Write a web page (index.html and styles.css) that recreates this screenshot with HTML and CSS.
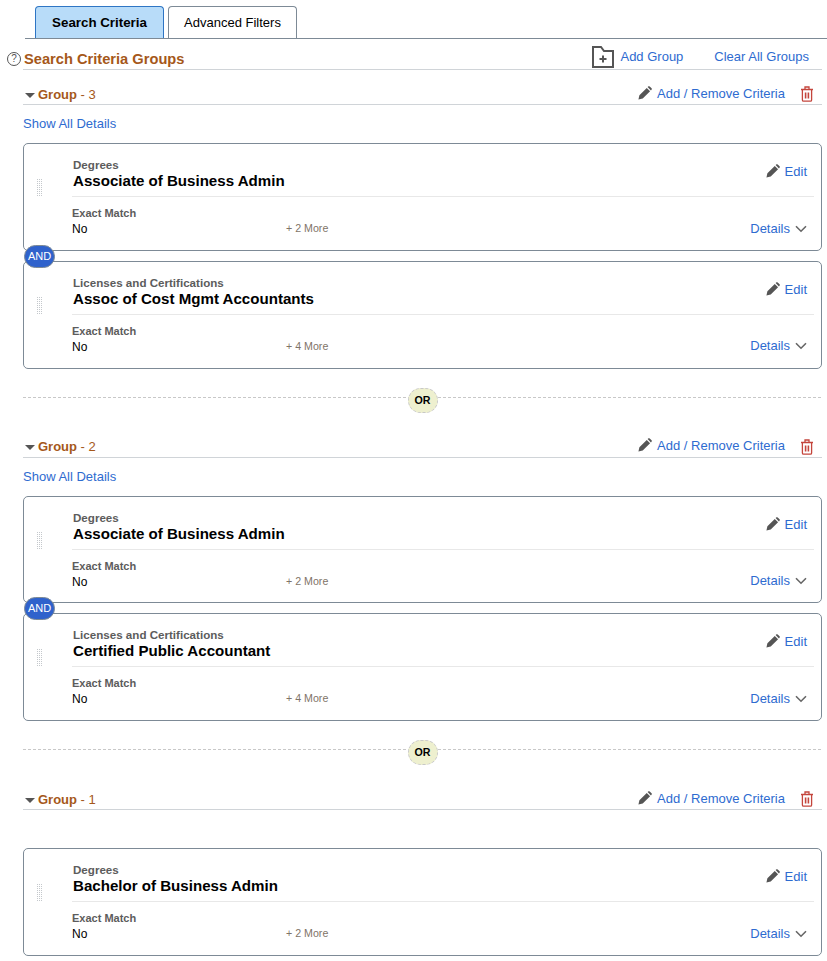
FILE: index.html
```html
<!DOCTYPE html>
<html lang="en">
<head>
    <meta charset="UTF-8">
    <title>Search Criteria</title>
    <link rel="stylesheet" href="styles.css">
</head>
<body>
    <svg class="icon-defs" width="0" height="0">
        <symbol id="pencil" viewBox="0 0 16 16">
            <path d="M0.5 15.5 L1.6 10.6 L10 2.2 L13.8 6 L5.4 14.4 Z M11 1.2 L12 0.4 Q12.7 -0.1 13.4 0.5 L15.5 2.6 Q16.1 3.3 15.6 4 L14.8 5 Z" fill="#555"/>
        </symbol>
        <symbol id="trash" viewBox="0 0 14 16">
            <path d="M1 3.5 H13 M5 3.2 V1 H9 V3.2 M2.4 3.5 V14 Q2.4 15.2 3.6 15.2 H10.4 Q11.6 15.2 11.6 14 V3.5" fill="none" stroke="#c4453c" stroke-width="1.3"/>
            <path d="M5.6 6.5 V12.5 M8.4 6.5 V12.5" fill="none" stroke="#c4453c" stroke-width="1.6"/>
        </symbol>
        <symbol id="chevron" viewBox="0 0 12 8">
            <path d="M1 1.2 L6 6.2 L11 1.2" fill="none" stroke="#666" stroke-width="1.6"/>
        </symbol>
    </svg>

    <div class="tabs">
        <a class="tab tab-active">Search Criteria</a>
        <a class="tab">Advanced Filters</a>
    </div>

    <div class="page-head">
        <span class="help">?</span>
        <h1>Search Criteria Groups</h1>
        <a class="link add-group">
            <svg class="folder" width="22" height="22" viewBox="0 0 22 22">
                <path d="M1 21 V1 H9 L12 5 H21 V21 Z" fill="none" stroke="#555" stroke-width="2"/>
                <path d="M11 9.5 V16.5 M7.5 13 H14.5" fill="none" stroke="#555" stroke-width="2"/>
            </svg>
            Add Group
        </a>
        <a class="link clear-all">Clear All Groups</a>
    </div>

    <section class="group">
        <div class="group-head">
            <span class="caret"></span>
            <h2>Group <span class="group-num">- 3</span></h2>
            <a class="link group-edit"><svg class="pencil"><use href="#pencil"/></svg>Add / Remove Criteria</a>
            <svg class="trash"><use href="#trash"/></svg>
        </div>
        <div class="show-all"><a class="link">Show All Details</a></div>

        <div class="card">
            <div class="handle"></div>
            <div class="card-body">
                <div class="card-top">
                    <div>
                        <div class="card-label">Degrees</div>
                        <div class="card-title">Associate of Business Admin</div>
                    </div>
                    <a class="link edit"><svg class="pencil"><use href="#pencil"/></svg>Edit</a>
                </div>
                <div class="card-bottom">
                    <div class="match">
                        <div class="match-label">Exact Match</div>
                        <div class="match-value">No</div>
                    </div>
                    <span class="more">+ 2 More</span>
                    <a class="link details">Details<svg class="chevron"><use href="#chevron"/></svg></a>
                </div>
            </div>
        </div>
        <div class="and-gap"><span class="and">AND</span></div>
        <div class="card">
            <div class="handle"></div>
            <div class="card-body">
                <div class="card-top">
                    <div>
                        <div class="card-label">Licenses and Certifications</div>
                        <div class="card-title">Assoc of Cost Mgmt Accountants</div>
                    </div>
                    <a class="link edit"><svg class="pencil"><use href="#pencil"/></svg>Edit</a>
                </div>
                <div class="card-bottom">
                    <div class="match">
                        <div class="match-label">Exact Match</div>
                        <div class="match-value">No</div>
                    </div>
                    <span class="more">+ 4 More</span>
                    <a class="link details">Details<svg class="chevron"><use href="#chevron"/></svg></a>
                </div>
            </div>
        </div>
    </section>

    <div class="or-row"><span class="or">OR</span></div>

    <section class="group">
        <div class="group-head">
            <span class="caret"></span>
            <h2>Group <span class="group-num">- 2</span></h2>
            <a class="link group-edit"><svg class="pencil"><use href="#pencil"/></svg>Add / Remove Criteria</a>
            <svg class="trash"><use href="#trash"/></svg>
        </div>
        <div class="show-all"><a class="link">Show All Details</a></div>

        <div class="card">
            <div class="handle"></div>
            <div class="card-body">
                <div class="card-top">
                    <div>
                        <div class="card-label">Degrees</div>
                        <div class="card-title">Associate of Business Admin</div>
                    </div>
                    <a class="link edit"><svg class="pencil"><use href="#pencil"/></svg>Edit</a>
                </div>
                <div class="card-bottom">
                    <div class="match">
                        <div class="match-label">Exact Match</div>
                        <div class="match-value">No</div>
                    </div>
                    <span class="more">+ 2 More</span>
                    <a class="link details">Details<svg class="chevron"><use href="#chevron"/></svg></a>
                </div>
            </div>
        </div>
        <div class="and-gap"><span class="and">AND</span></div>
        <div class="card">
            <div class="handle"></div>
            <div class="card-body">
                <div class="card-top">
                    <div>
                        <div class="card-label">Licenses and Certifications</div>
                        <div class="card-title">Certified Public Accountant</div>
                    </div>
                    <a class="link edit"><svg class="pencil"><use href="#pencil"/></svg>Edit</a>
                </div>
                <div class="card-bottom">
                    <div class="match">
                        <div class="match-label">Exact Match</div>
                        <div class="match-value">No</div>
                    </div>
                    <span class="more">+ 4 More</span>
                    <a class="link details">Details<svg class="chevron"><use href="#chevron"/></svg></a>
                </div>
            </div>
        </div>
    </section>

    <div class="or-row"><span class="or">OR</span></div>

    <section class="group">
        <div class="group-head">
            <span class="caret"></span>
            <h2>Group <span class="group-num">- 1</span></h2>
            <a class="link group-edit"><svg class="pencil"><use href="#pencil"/></svg>Add / Remove Criteria</a>
            <svg class="trash"><use href="#trash"/></svg>
        </div>
        <div class="show-all"></div>

        <div class="card">
            <div class="handle"></div>
            <div class="card-body">
                <div class="card-top">
                    <div>
                        <div class="card-label">Degrees</div>
                        <div class="card-title">Bachelor of Business Admin</div>
                    </div>
                    <a class="link edit"><svg class="pencil"><use href="#pencil"/></svg>Edit</a>
                </div>
                <div class="card-bottom">
                    <div class="match">
                        <div class="match-label">Exact Match</div>
                        <div class="match-value">No</div>
                    </div>
                    <span class="more">+ 2 More</span>
                    <a class="link details">Details<svg class="chevron"><use href="#chevron"/></svg></a>
                </div>
            </div>
        </div>
    </section>
</body>
</html>
```

FILE: styles.css
```css
body {
    margin: 0;
    background-color: #fff;
    color: #000;
    font-family: "Liberation Sans", Arial, sans-serif;
    overflow: hidden;
}

.icon-defs {
    position: absolute;
}

.link {
    color: #2e6bd0;
    font-size: 13px;
    cursor: pointer;
}

/* Tabs */
.tabs {
    display: flex;
    gap: 4px;
    height: 32px;
    margin: 6px 0 0 25px;
    padding-left: 10px;
    border-bottom: 1px solid #7d8a96;
}

.tab {
    box-sizing: border-box;
    width: 129px;
    height: 32px;
    border: 1px solid #7d8a96;
    border-bottom: none;
    border-radius: 4px 4px 0 0;
    font-size: 13px;
    line-height: 32px;
    text-align: center;
}

.tab-active {
    background-color: #b8dcf9;
    border-color: #2e75c4;
    font-size: 13.33px;
    font-weight: bold;
}

/* Page heading */
.page-head {
    position: relative;
    display: flex;
    align-items: center;
    height: 30px;
    margin: 0 5px 0 23px;
    border-bottom: 1px solid #d0d4d8;
}

.help {
    position: absolute;
    left: -16px;
    top: 13px;
    box-sizing: border-box;
    width: 14px;
    height: 14px;
    border: 1px solid #555;
    border-radius: 50%;
    color: #555;
    font-size: 10px;
    line-height: 12px;
    text-align: center;
}

h1 {
    flex: 1;
    margin: 10px 0 0 1px;
    color: #a5581a;
    font-size: 14.67px;
    font-weight: bold;
}

.add-group {
    display: flex;
    align-items: center;
    gap: 6px;
    margin: 5px 31px 0 1px;
}

.clear-all {
    margin: 5px 13px 0 0;
}

/* Groups */
.group {
    margin: 0 5px 0 23px;
}

.group-head {
    display: flex;
    align-items: center;
    box-sizing: border-box;
    height: 35px;
    padding-top: 14px;
    border-bottom: 1px solid #d0d4d8;
}

.group-head .trash {
    width: 14px;
    height: 16px;
    margin: 0 8px 0 15px;
}

.group-edit {
    margin-top: -2px;
}

.caret {
    width: 0;
    height: 0;
    margin: 2px 3px 0 2px;
    border-left: 5px solid transparent;
    border-right: 5px solid transparent;
    border-top: 5px solid #555;
}

h2 {
    flex: 1;
    margin: 0;
    color: #a5581a;
    font-size: 13px;
    font-weight: bold;
}

.group-num {
    font-weight: normal;
}

.pencil {
    width: 14px;
    height: 14px;
    margin-right: 5px;
    vertical-align: -2px;
}

.show-all {
    height: 38px;
    line-height: 37px;
}

.show-all .link {
    display: block;
}

/* Cards */
.card {
    display: flex;
    box-sizing: border-box;
    height: 107.75px;
    border: 1px solid #7d8a96;
    border-radius: 5px;
}

.handle {
    width: 6px;
    height: 19px;
    margin: 34px 29px 0 13px;
    background-image: linear-gradient(to bottom, #fff 50%, transparent 50%), linear-gradient(to right, #c4c8cc 50%, transparent 50%);
    background-size: 2px 2px;
}

.card-body {
    flex: 1;
    margin-right: 7px;
}

.card-top {
    display: flex;
    justify-content: space-between;
    box-sizing: border-box;
    height: 53px;
    padding: 14px 7px 0 1px;
    border-bottom: 1px solid #e8e8e8;
}

.card-label {
    color: #5c5c5c;
    font-size: 11.6px;
    font-weight: bold;
}

.card-title {
    margin-top: 1px;
    font-size: 15.1px;
    font-weight: bold;
}

.edit {
    margin-top: 6px;
}

.card-bottom {
    display: flex;
    align-items: center;
    padding: 10px 7px 0 0;
}

.match {
    width: 214px;
}

.match-label {
    color: #5c5c5c;
    font-size: 11px;
    font-weight: bold;
}

.match-value {
    margin-top: 3px;
    font-size: 12px;
}

.more {
    flex: 1;
    margin-top: 13px;
    color: #7f7468;
    font-size: 10.67px;
}

.details {
    margin-top: 13px;
}

.chevron {
    width: 12px;
    height: 8px;
    margin-left: 5px;
}

/* AND / OR connectors */
.and-gap {
    position: relative;
    height: 10px;
}

.and {
    position: absolute;
    left: 1px;
    top: -6px;
    box-sizing: border-box;
    width: 31px;
    height: 23px;
    background-color: #2f62cc;
    border: 1px solid #7d8a96;
    border-radius: 12px;
    color: #fff;
    font-size: 11px;
    line-height: 21px;
    text-align: center;
}

.or-row {
    display: flex;
    justify-content: center;
    height: 54px;
    margin: 0 5px 0 23px;
    background-image: linear-gradient(to right, #c8c8c8 60%, transparent 60%);
    background-size: 5px 1px;
    background-repeat: repeat-x;
    background-position: 0 28px;
}

.or {
    box-sizing: border-box;
    width: 30px;
    height: 25px;
    margin-top: 19px;
    background-color: #eef0cf;
    border: 1px dashed #c8c8c8;
    border-radius: 13px;
    font-size: 10.67px;
    font-weight: bold;
    line-height: 23px;
    text-align: center;
}
```
